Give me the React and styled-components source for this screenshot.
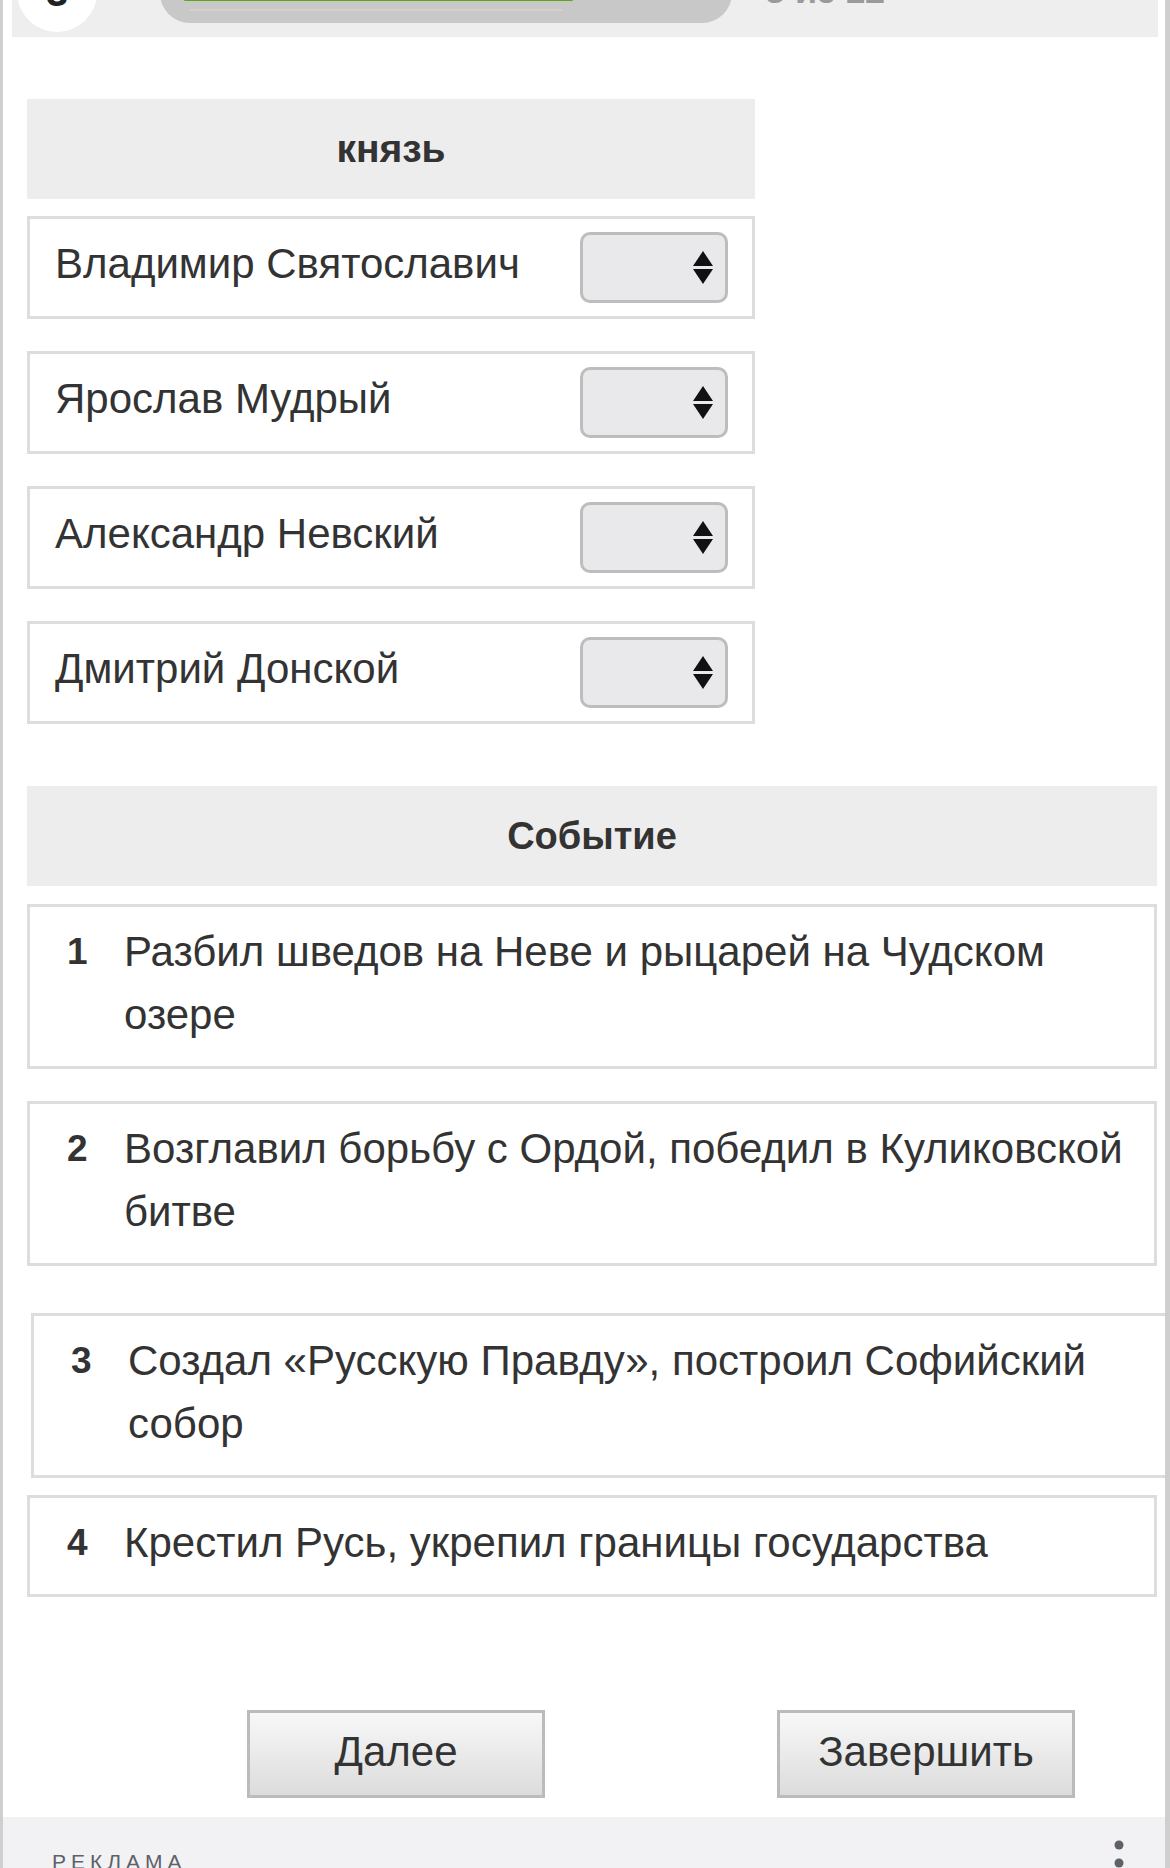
import React from "react";
import styled, { createGlobalStyle } from "styled-components";

const GlobalStyle = createGlobalStyle`
  html, body {
    margin: 0;
    padding: 0;
    background: #ffffff;
    overflow: hidden;
  }
  body {
    font-family: "Liberation Sans", Arial, Helvetica, sans-serif;
    color: #333333;
  }
`;

const Page = styled.div`
  width: 1170px;
  height: 1868px;
  box-sizing: border-box;
  border-left: 3px solid #cfcfcf;
  border-right: 5px solid #cfcfcf;
  overflow: hidden;
  display: flex;
  flex-direction: column;
`;

const TopBar = styled.div`
  flex-shrink: 0;
  margin: -83px 7px 0 9px;
  height: 120px;
  background: #eeeeee;
  display: flex;
  align-items: flex-end;
`;

const StepCircle = styled.div`
  flex-shrink: 0;
  width: 80px;
  height: 80px;
  margin: 0 0 5px 5px;
  border-radius: 50%;
  background: #ffffff;
  display: flex;
  align-items: center;
  justify-content: center;
  font-size: 40px;
  font-weight: 700;
  color: #222222;
`;

const Pill = styled.div`
  flex-shrink: 0;
  width: 572px;
  height: 60px;
  margin: 0 0 14px 63px;
  border-radius: 30px;
  background: #c8c8c8;
  box-sizing: border-box;
  padding: 22px 0 0 23px;
  display: flex;
  flex-direction: column;
`;

const Fill = styled.div`
  width: 391px;
  height: 16px;
  border-radius: 3px;
  background: #5ea51f;
`;

const FillShade = styled.div`
  width: 372px;
  height: 2px;
  margin: 8px 0 0 7px;
  background: #d6cece;
`;

const Counter = styled.div`
  margin: 0 0 26px 33px;
  font-size: 36px;
  line-height: 40px;
  font-weight: 700;
  color: #9a9a9a;
`;

const Content = styled.div`
  flex-shrink: 0;
  padding: 62px 8px 0 24px;
  display: flex;
  flex-direction: column;
`;

const Column = styled.div`
  width: ${(p) => p.$width};
  display: flex;
  flex-direction: column;
`;

const HeaderCell = styled.div`
  flex-shrink: 0;
  height: 100px;
  background: #ededed;
  display: flex;
  align-items: center;
  justify-content: center;
  font-size: ${(p) => p.$size};
  font-weight: 700;
  color: #333333;
  margin-bottom: ${(p) => p.$gap};
`;

const PrinceRow = styled.div`
  flex-shrink: 0;
  height: 103px;
  box-sizing: border-box;
  border: 3px solid #dddddd;
  padding: 0 24px 0 25px;
  display: flex;
  align-items: center;
  justify-content: space-between;
  & + & {
    margin-top: 32px;
  }
`;

const PrinceName = styled.span`
  font-size: 42px;
  color: #333333;
  padding-bottom: 7px;
`;

const SelectBox = styled.div`
  width: 148px;
  height: 71px;
  box-sizing: border-box;
  border: 3px solid #bdbdbd;
  border-radius: 10px;
  background: #e9e9eb;
  display: flex;
  align-items: center;
  justify-content: flex-end;
  padding-right: 11px;
`;

const EventsSection = styled.div`
  margin-top: 62px;
  display: flex;
  flex-direction: column;
`;

const EventRow = styled.div`
  flex-shrink: 0;
  box-sizing: border-box;
  border: 3px solid #dddddd;
  background: #ffffff;
  padding: 13px 20px 20px 37px;
  display: flex;
  align-items: flex-start;
  width: ${(p) => (p.$dragging ? "calc(100% + 12px)" : "100%")};
  transform: ${(p) => (p.$dragging ? "translate(4px, 15px)" : "none")};
  & + & {
    margin-top: 32px;
  }
`;

const EventNum = styled.span`
  flex: 0 0 57px;
  font-size: 37px;
  font-weight: 700;
  line-height: 63px;
  color: #333333;
`;

const EventText = styled.span`
  flex: 1;
  font-size: 42px;
  line-height: 63px;
  color: #333333;
`;

const ButtonRow = styled.div`
  margin: 113px 0 0 220px;
  display: flex;
  gap: 232px;
`;

const Button = styled.button`
  flex-shrink: 0;
  width: 298px;
  height: 88px;
  box-sizing: border-box;
  border: 3px solid #bbbbbb;
  border-radius: 0;
  background: linear-gradient(#f8f8f8, #dcdcdc);
  font-family: "Liberation Sans", Arial, Helvetica, sans-serif;
  font-size: 42px;
  color: #333333;
  padding: 0 0 4px;
  cursor: pointer;
`;

const AdBar = styled.div`
  margin-top: 19px;
  flex: 1 0 auto;
  background: #f2f2f5;
  display: flex;
  justify-content: space-between;
  align-items: flex-start;
  padding: 33px 40px 0 49px;
`;

const AdLabel = styled.span`
  font-size: 21px;
  line-height: 24px;
  letter-spacing: 5px;
  font-weight: 500;
  color: #5d6168;
`;

const DotsButton = styled.span`
  display: flex;
  margin-top: -11px;
`;

function ArrowsIcon() {
  return (
    <svg width="22" height="34" viewBox="0 0 22 34">
      <polygon points="11,0 21,15 1,15" fill="#111" />
      <polygon points="1,18 21,18 11,33" fill="#111" />
    </svg>
  );
}

function DotsIcon() {
  return (
    <svg width="12" height="60" viewBox="0 0 12 60">
      <circle cx="6" cy="6" r="4.5" fill="#5d6168" />
      <circle cx="6" cy="24" r="4.5" fill="#5d6168" />
      <circle cx="6" cy="42" r="4.5" fill="#5d6168" />
    </svg>
  );
}

const princes = [
  "Владимир Святославич",
  "Ярослав Мудрый",
  "Александр Невский",
  "Дмитрий Донской",
];

const events = [
  "Разбил шведов на Неве и рыцарей на Чудском озере",
  "Возглавил борьбу с Ордой, победил в Куликовской битве",
  "Создал «Русскую Правду», построил Софийский собор",
  "Крестил Русь, укрепил границы государства",
];

export default function App() {
  return (
    <>
      <GlobalStyle />
      <Page>
        <TopBar>
          <StepCircle>3</StepCircle>
          <Pill>
            <Fill />
            <FillShade />
          </Pill>
          <Counter>3 из 12</Counter>
        </TopBar>
        <Content>
          <Column $width="728px">
            <HeaderCell $gap="17px" $size="39px">князь</HeaderCell>
            {princes.map((name) => (
              <PrinceRow key={name}>
                <PrinceName>{name}</PrinceName>
                <SelectBox>
                  <ArrowsIcon />
                </SelectBox>
              </PrinceRow>
            ))}
          </Column>
          <EventsSection>
            <HeaderCell $gap="18px" $size="38px">Событие</HeaderCell>
            {events.map((text, i) => (
              <EventRow key={text} $dragging={i === 2}>
                <EventNum>{i + 1}</EventNum>
                <EventText>{text}</EventText>
              </EventRow>
            ))}
          </EventsSection>
          <ButtonRow>
            <Button>Далее</Button>
            <Button>Завершить</Button>
          </ButtonRow>
        </Content>
        <AdBar>
          <AdLabel>РЕКЛАМА</AdLabel>
          <DotsButton>
            <DotsIcon />
          </DotsButton>
        </AdBar>
      </Page>
    </>
  );
}
